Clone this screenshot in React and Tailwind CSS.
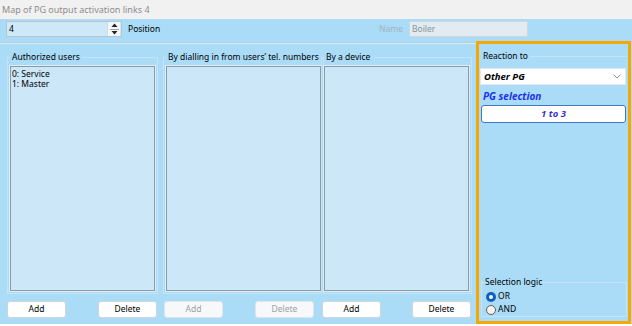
export default function App() {
  const Btn = ({ children, disabled }) => (
    <div
      className={
        "w-[59px] h-[17px] rounded-[3px] border flex items-center justify-center " +
        (disabled
          ? "bg-[#f7f8f9] border-[#dfe5e9] text-[#9aa0a4]"
          : "bg-white border-[#cfd6db] text-black")
      }
    >
      {children}
    </div>
  );

  const Group = ({ title, items, w }) => (
    <div className={"flex flex-col " + w}>
      <fieldset className="border border-[#c6e3f3] px-[2px] pb-[2px] m-0">
        <legend className="px-[2px] leading-[10px] h-[10px] whitespace-nowrap text-black">{title}</legend>
        <div className="mt-[4px] h-[225px] bg-[#cce7f8] border border-[#8e9aa3] shadow-[0_0_0_1px_#dbeefa] pt-[2px] pl-[1px]">
          {items.map((t) => (
            <div key={t} className="leading-[10px]">
              {t}
            </div>
          ))}
        </div>
      </fieldset>
    </div>
  );

  const ButtonsRow = ({ disabled, w, cls }) => (
    <div className={"flex justify-between " + w + " " + cls}>
      <Btn disabled={disabled}>Add</Btn>
      <Btn disabled={disabled}>Delete</Btn>
    </div>
  );

  return (
    <div className="w-[632px] h-[326px] bg-white font-['Noto_Sans',sans-serif] text-[8.5px] text-black leading-none overflow-hidden">
      <div className="h-[19px] bg-[#f1f1f1] flex items-center pl-[2px] text-[#8d8d8d] text-[9px]">
        Map of PG output activation links 4
      </div>
      <div className="h-[305px] bg-[#aadcf8] flex flex-col">
        <div className="h-[22px] shrink-0 flex items-start pt-[2px]">
          <div className="ml-[6px] w-[116px] h-[16px] border border-[#b3c6d2] bg-[#cfe8f8] flex items-center">
            <span className="pl-[2px] flex-1">4</span>
            <div className="w-[13px] h-[14px] mr-[1px] bg-[#f4f6f8] flex flex-col items-center justify-center border-l border-[#d3dbe0]">
              <svg width="7" height="5" viewBox="0 0 7 5">
                <polygon points="3.5,0.5 6.5,4 0.5,4" fill="#222" />
              </svg>
              <div className="w-[9px] h-px bg-[#9aa6ad] my-[0.5px]" />
              <svg width="7" height="5" viewBox="0 0 7 5">
                <polygon points="0.5,1 6.5,1 3.5,4.5" fill="#222" />
              </svg>
            </div>
          </div>
          <span className="ml-[6px] mt-[4px]">Position</span>
          <div className="flex-1" />
          <span className="mt-[4px] text-[#a3b2bc]">Name</span>
          <div className="ml-[6px] w-[119px] h-[16px] border border-[#cdd7de] bg-[#e2ebf1] flex items-center pl-[2px] text-[#87939b] mr-[104px]">
            Boiler
          </div>
        </div>
        <div className="flex h-[283px] shrink-0">
          <div className="w-[476px] flex flex-col">
            <div className="mt-[1px] h-px bg-[#b7cfdd]" />
            <div className="h-px bg-[#d4edfb]" />
            <div className="mt-[8px] ml-[7px] flex items-start gap-[5px]">
              <Group w="w-[151px]" title="Authorized users" items={["0: Service", "1: Master"]} />
              <Group w="w-[153px]" title="By dialling in from users’ tel. numbers" items={[]} />
              <Group w="w-[151px]" title="By a device" items={[]} />
            </div>
            <div className="mt-[7px] ml-[7px] flex gap-[5px]">
              <ButtonsRow w="w-[151px]" cls="pr-[1px]" />
              <ButtonsRow w="w-[153px]" cls="pl-[1px] pr-[2px]" disabled />
              <ButtonsRow w="w-[151px]" cls="pl-[1px] pr-[1px]" />
            </div>
          </div>
          <div className="w-[155px] h-[283px] border-[3px] border-[#f6a700] flex flex-col">
            <div className="mt-[7px] ml-[4px] mr-[1px] flex items-center h-[10px]">
              <span>Reaction to</span>
              <div className="flex-1 h-px bg-[#c6e3f3] ml-[2px]" />
            </div>
            <div className="mt-[7px] ml-[1px] w-[146px] h-[17px] bg-white border border-[#e3e8eb] flex items-center pl-[3px] pr-[4px]">
              <span className="flex-1 font-bold italic text-[9.5px]">Other PG</span>
              <svg width="8" height="5" viewBox="0 0 8 5">
                <polyline points="0.5,0.5 4,4 7.5,0.5" fill="none" stroke="#8a8a8a" strokeWidth="0.9" />
              </svg>
            </div>
            <div className="mt-[6px] ml-[4px] font-bold italic text-[#1d2ff0] text-[10px] leading-[11px]">
              PG selection
            </div>
            <div className="mt-[3px] ml-[2px] w-[145px] h-[18px] bg-white border border-[#3d78c8] rounded-[3px] flex items-center justify-center font-bold italic text-[#3a2fd6] text-[9.5px]">
              1 to 3
            </div>
            <fieldset className="mt-auto mb-[4px] ml-[2px] mr-[1px] border border-[#c6e3f3] px-[2px] pb-0 m-0">
              <legend className="px-[1px] leading-[10px] h-[10px]">Selection logic</legend>
              <div className="flex items-center h-[13px] mt-[3px]">
                <span className="w-[10px] h-[10px] rounded-full bg-[#0e5fc2] flex items-center justify-center ml-[2px]">
                  <span className="w-[4px] h-[4px] rounded-full bg-white" />
                </span>
                <span className="ml-[2px]">OR</span>
              </div>
              <div className="flex items-center h-[13px]">
                <span className="w-[10px] h-[10px] rounded-full bg-[#f4f4f4] border border-[#5d5d5d] ml-[2px]" />
                <span className="ml-[2px]">AND</span>
              </div>
            </fieldset>
          </div>
        </div>
      </div>
    </div>
  );
}
